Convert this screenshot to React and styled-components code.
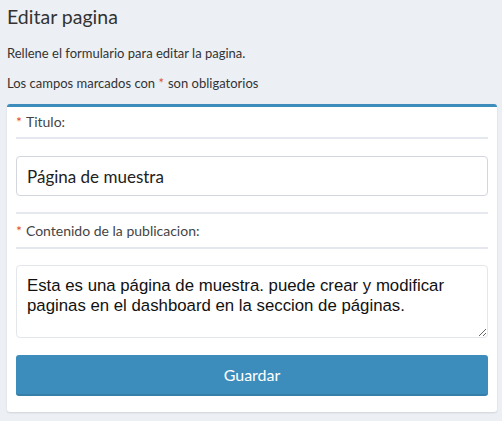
import styled, { createGlobalStyle } from "styled-components";

const Global = createGlobalStyle`
  html, body {
    margin: 0;
    padding: 0;
    background: #ecf0f5;
  }
  body {
    font-family: "Lato", "Open Sans", sans-serif;
    color: #333;
  }
`;

const Page = styled.div`
  padding: 0 5px 8px 7px;
`;

const Header = styled.header`
  padding-top: 6px;
`;

const Title = styled.h1`
  margin: 0 0 16px;
  font-size: 19.5px;
  font-weight: 400;
  line-height: 22px;
  color: #333;
`;

const Intro = styled.p`
  margin: 0 0 11px;
  font-size: 13px;
  line-height: 19px;
`;

const Required = styled.span`
  color: #dd4b39;
  margin-right: 4px;
`;

const Box = styled.form`
  background: #fff;
  border-top: 3px solid #3c8dbc;
  border-radius: 3px;
  box-shadow: 0 1px 2px rgba(0, 0, 0, 0.12);
  padding: 0 9px 16px;
  display: flex;
  flex-direction: column;
`;

const FieldLabel = styled.label`
  display: block;
  font-size: 14px;
  line-height: 18px;
  padding: ${(p) => (p.$first ? "6px 0 6px" : "8px 0 7px")};
  border-top: ${(p) => (p.$first ? "none" : "2px solid #e5e8ee")};
  border-bottom: 2px solid #e5e8ee;
  color: #444;
`;

const TextInput = styled.input`
  box-sizing: border-box;
  margin: 17px 0 16px;
  height: 40px;
  width: 100%;
  border: 1px solid #d2d6de;
  border-radius: 4px;
  padding: 0 10px;
  font-family: "Lato", "Open Sans", sans-serif;
  font-size: 17px;
  color: #222;
  outline: none;
`;

const TextArea = styled.textarea`
  box-sizing: border-box;
  margin: 16px 0 17px;
  height: 73px;
  width: 100%;
  border: 1px solid #e3e6ea;
  border-radius: 4px;
  padding: 10px 10px;
  font-family: "Liberation Sans", Arial, sans-serif;
  font-size: 16.8px;
  line-height: 20px;
  color: #111;
  resize: vertical;
  outline: none;
`;

const SaveButton = styled.button`
  height: 41px;
  width: 100%;
  border: none;
  border-bottom: 2px solid #367fa9;
  border-radius: 3px;
  background: #3c8dbc;
  color: #fff;
  font-family: "Lato", "Open Sans", sans-serif;
  font-size: 16px;
  cursor: pointer;
`;

export default function App() {
  return (
    <>
      <Global />
      <Page>
        <Header>
          <Title>Editar pagina</Title>
          <Intro>Rellene el formulario para editar la pagina.</Intro>
          <Intro>
            Los campos marcados con <Required>*</Required>son obligatorios
          </Intro>
        </Header>
        <Box onSubmit={(e) => e.preventDefault()}>
          <FieldLabel $first>
            <Required>*</Required>Titulo:
          </FieldLabel>
          <TextInput defaultValue="Página de muestra" />
          <FieldLabel>
            <Required>*</Required>Contenido de la publicacion:
          </FieldLabel>
          <TextArea defaultValue="Esta es una página de muestra. puede crear y modificar paginas en el dashboard en la seccion de páginas." />
          <SaveButton type="submit">Guardar</SaveButton>
        </Box>
      </Page>
    </>
  );
}
